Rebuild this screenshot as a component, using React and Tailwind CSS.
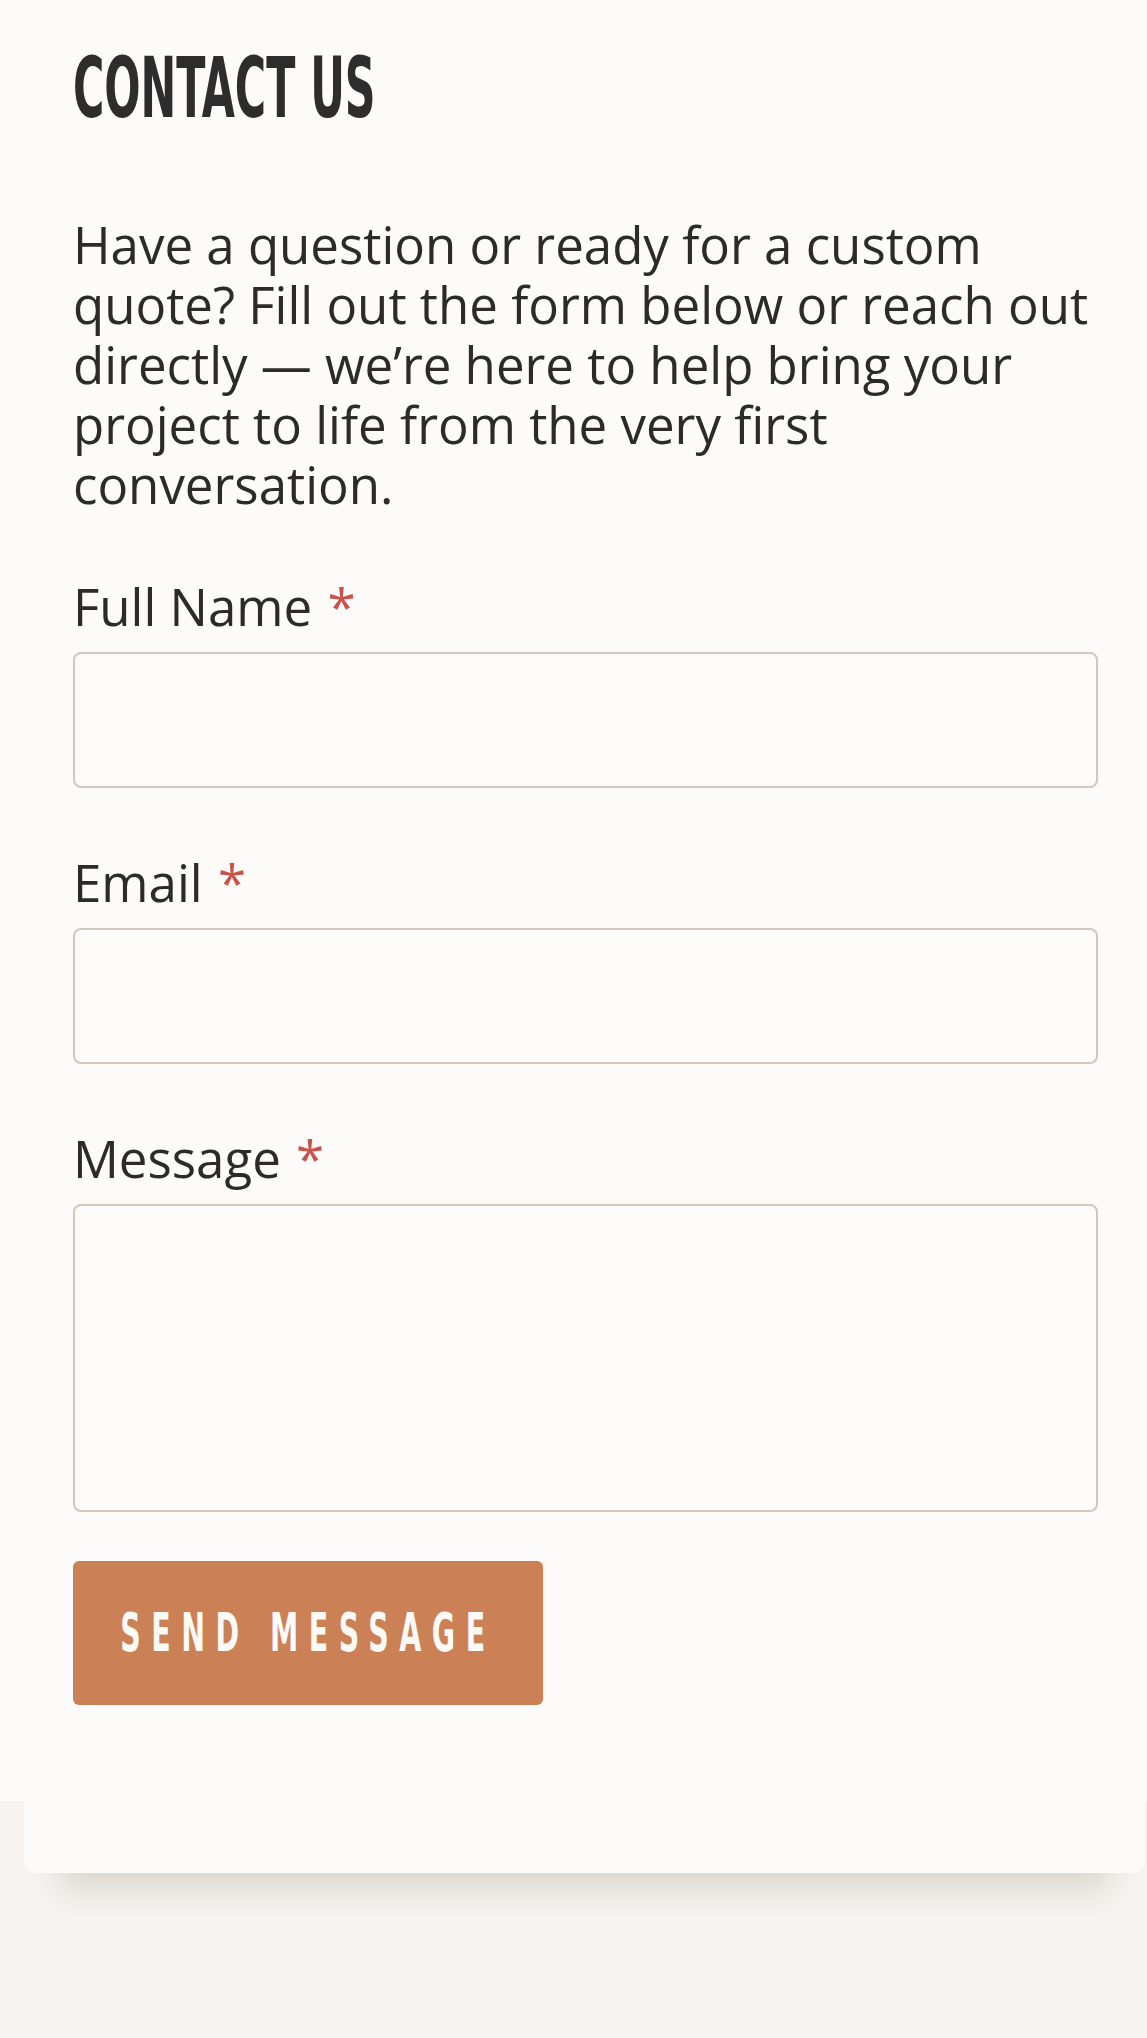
import { useState } from 'react'

const Field = ({ label, type = 'text', multiline = false, value, onChange }) => {
  return (
    <label className="flex flex-col">
      <span className="text-[51px] leading-[59px] text-[#2b2b2b] mb-4">
        {label} <span className="ml-[2px] text-[#c9524b]">*</span>
      </span>
      {multiline ? (
        <textarea
          value={value}
          onChange={onChange}
          className="h-[308px] w-full resize-none rounded-lg border-2 border-[#d1c7ba] bg-[#fdfcfb] px-4 py-3 text-[40px] outline-none"
        />
      ) : (
        <input
          type={type}
          value={value}
          onChange={onChange}
          className="h-[136px] w-full rounded-lg border-2 border-[#d1c7ba] bg-[#fdfcfb] px-4 text-[40px] outline-none"
        />
      )}
    </label>
  )
}

export default function App() {
  const [form, setForm] = useState({ name: '', email: '', message: '' })

  const update = (key) => (e) => setForm({ ...form, [key]: e.target.value })

  return (
    <div className="min-h-screen bg-[#f6f3f0] font-['Open_Sans',sans-serif] text-[#2b2b2b]">
      <section className="flow-root bg-[#fcfbf9]">
        {/* Card */}
        <div className="relative z-10 -mb-[72px] ml-[24px] w-[1121px] rounded-b-xl bg-[#fcfbf9] pl-[49px] pr-[47px] pt-[46px] pb-[168px] shadow-[0_52px_30px_-36px_rgba(80,60,40,0.16)]">
          <h1 className="h-[84px] font-['Liberation_Sans_Narrow','DejaVu_Sans_Condensed',sans-serif] text-[84px] leading-[84px] font-bold text-[#2d2d2d]">
            <span className="inline-block origin-left scale-x-[0.565] whitespace-nowrap">CONTACT US</span>
          </h1>

          <p className="mt-[84px] text-[51px] leading-[60px] text-[#2b2b2b]">
            Have a question or ready for a custom quote? Fill out the form below or reach out directly — we’re here to help bring your project to life from the very first conversation.
          </p>

          <form className="mt-[63px] flex flex-col gap-[65px]" onSubmit={(e) => e.preventDefault()}>
            <Field label="Full Name" value={form.name} onChange={update('name')} />
            <Field label="Email" type="email" value={form.email} onChange={update('email')} />
            <Field label="Message" multiline value={form.message} onChange={update('message')} />
          </form>

          <button
            type="submit"
            className="mt-[49px] flex h-[144px] w-[470px] items-center justify-center rounded-md bg-[#cb8155] text-[#fdfaf6]"
          >
            <span className="inline-block origin-center scale-x-[0.585] whitespace-nowrap font-['Liberation_Sans_Narrow','DejaVu_Sans_Condensed',sans-serif] text-[54px] leading-none font-bold tracking-[18px]">
              SEND MESSAGE
            </span>
          </button>
        </div>
      </section>
    </div>
  )
}
